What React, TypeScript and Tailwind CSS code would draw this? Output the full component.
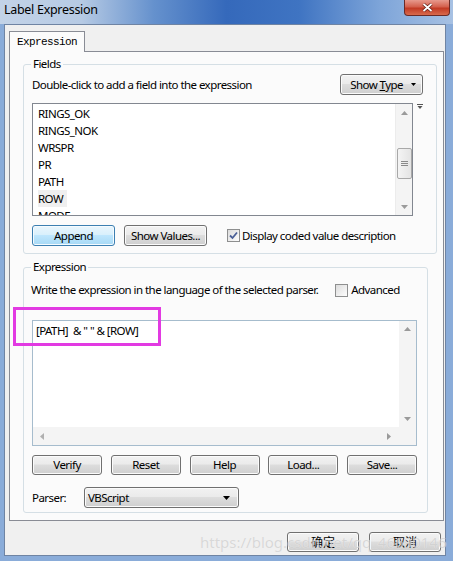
import React from "react";

const font = "font-['Noto_Sans',sans-serif]";
const t = "text-[11.5px] tracking-[-0.55px] text-black";

const btnBase =
  "flex items-center rounded-[3px] border border-[#707070] bg-[linear-gradient(#f2f2f2_0%,#ebebeb_45%,#dddddd_50%,#cfcfcf_100%)] leading-none shadow-[inset_0_0_0_1px_#fbfbfb]";
const btn = `${btnBase} justify-center ${t}`;

function ArrowUp() {
  return (
    <svg width="7" height="4" viewBox="0 0 7 4">
      <path d="M0 4 L3.5 0 L7 4 Z" fill="#9a9a9a" />
    </svg>
  );
}

function ArrowDown() {
  return (
    <svg width="7" height="4" viewBox="0 0 7 4">
      <path d="M0 0 L7 0 L3.5 4 Z" fill="#9a9a9a" />
    </svg>
  );
}

function Check({ checked }: { checked?: boolean }) {
  return (
    <span className="flex h-[13px] w-[13px] shrink-0 items-center justify-center border border-[#8e8f8f] bg-[linear-gradient(135deg,#dcdcdc,#fdfdfd)]">
      {checked && (
        <svg width="9" height="9" viewBox="0 0 9 9">
          <path d="M1 4.5 L3.5 7 L8 1.5" stroke="#4a5f97" strokeWidth="1.8" fill="none" />
        </svg>
      )}
    </span>
  );
}

const fields = ["RINGS_OK", "RINGS_NOK", "WRSPR", "PR", "PATH", "ROW", "MODE"];

export default function App() {
  return (
    <div className={`relative flex h-[561px] w-[453px] flex-col overflow-hidden bg-[#8aacd9] ${font}`}>
      {/* title bar */}
      <div className="flex h-[24px] items-start bg-[linear-gradient(90deg,#c3d3e7_0%,#b6cae4_18%,#6591cd_34%,#3569bb_50%,#3f74c2_66%,#7ea5d9_84%,#a7c1e3_100%)]">
        <span className="pl-[4px] pt-[1px] text-[12.5px] leading-[18px] tracking-[-0.3px] text-black">Label Expression</span>
        <span className="ml-auto mr-[3px] flex h-[16px] w-[46px] items-center justify-center rounded-b-[4px] border border-t-0 border-[#6b2a26] bg-[linear-gradient(#e79a8d_0%,#d4604d_45%,#c23a24_55%,#d86a4d_100%)]">
          <svg width="11" height="9" viewBox="0 0 11 9">
            <path d="M1.5 1 L9.5 8 M9.5 1 L1.5 8" stroke="#5a1a12" strokeWidth="3.2" />
            <path d="M1.5 1 L9.5 8 M9.5 1 L1.5 8" stroke="#ffffff" strokeWidth="1.8" />
          </svg>
        </span>
      </div>

      {/* client area */}
      <div className="ml-[4px] mr-[7px] mb-[5px] flex flex-1 flex-col border border-[#6f84a3] bg-[#f0f0f0] pl-[4px] pr-[2px] pt-[6px]">
        {/* tab header */}
        <div className="relative z-10 -mb-px flex h-[21px] w-[76px] items-center border border-b-0 border-[#898c95] bg-[#fbfbfb] pl-[7px] font-['Liberation_Mono',monospace] text-[11px] tracking-[-0.6px] text-black">
          Expression
        </div>

        {/* tab page */}
        <div className="flex h-[470px] w-[435px] flex-col border border-[#898c95] bg-[#fbfbfb] pl-[13px] pt-[4px]">
          {/* Fields group */}
          <fieldset className="w-[405px] rounded-[3px] border border-[#d5dfe5] pb-[7px] pl-[8px] pr-[13px]">
            <legend className={`ml-[-1px] px-[2px] leading-[16px] ${t}`}>Fields</legend>
            <div className="mt-[2px] flex h-[21px] items-center justify-between">
              <span className={t}>Double-click to add a field into the expression</span>
              <span className={`${btnBase} ${t} h-[21px] w-[83px] justify-end gap-[8px] pr-[6px]`}>
                <span>
                  Show <span className="underline">T</span>ype
                </span>
                <svg width="5" height="3" viewBox="0 0 5 3">
                  <path d="M0 0 L5 0 L2.5 3 Z" fill="#000" />
                </svg>
              </span>
            </div>
            <div className="relative mt-[8px] flex">
              <div className="flex h-[113px] w-[381px] border border-[#828790] bg-white">
                <div className="flex flex-1 flex-col overflow-hidden pl-[5px] pt-[1px]">
                  {fields.map((f) => (
                    <span
                      key={f}
                      className={`h-[17px] w-fit shrink-0 leading-[17px] ${t} ${
                        f === "ROW" ? "bg-[#efefef] pr-[4px]" : ""
                      }`}
                    >
                      {f}
                    </span>
                  ))}
                </div>
                <div className="flex w-[17px] flex-col items-center border-l border-[#ececec] bg-[#f4f4f4]">
                  <span className="flex h-[17px] items-center">
                    <ArrowUp />
                  </span>
                  <span className="mt-[27px] flex h-[31px] w-[15px] items-center justify-center rounded-[2px] border border-[#a8a8a8] bg-[linear-gradient(90deg,#f4f4f4,#e4e4e4)]">
                    <svg width="7" height="7" viewBox="0 0 7 7">
                      <path d="M0 1.5 H7 M0 3.5 H7 M0 5.5 H7" stroke="#8a8a8a" strokeWidth="1" />
                    </svg>
                  </span>
                  <span className="mt-auto flex h-[17px] items-center">
                    <ArrowDown />
                  </span>
                </div>
              </div>
              <svg className="ml-[4px] mt-[1px]" width="6" height="6" viewBox="0 0 6 6">
                <path d="M0 0.5 H6" stroke="#555" strokeWidth="1" />
                <path d="M0.5 2 L5.5 2 L3 5 Z" fill="#555" />
              </svg>
            </div>
            <div className="mt-[9px] flex h-[21px] items-center">
              <span
                className={`flex h-[21px] w-[83px] items-center justify-center rounded-[3px] border border-[#3c7fb1] bg-[linear-gradient(#eaf6fd_0%,#d9f0fc_45%,#bee6fd_50%,#a7d9f5_100%)] shadow-[inset_0_0_0_1px_#f4fbff] ${t}`}
              >
                Append
              </span>
              <span className={`${btn} ml-[9px] h-[21px] w-[83px]`}>Show Values...</span>
              <span className={`ml-[20px] flex items-center gap-[2px] ${t}`}>
                <Check checked />
                Display coded value description
              </span>
            </div>
          </fieldset>

          {/* Expression group */}
          <fieldset className="mt-[5px] w-[405px] rounded-[3px] border border-[#d5dfe5] pb-[4px] pl-[8px] pr-[10px]">
            <legend className={`ml-[-1px] px-[2px] leading-[16px] ${t}`}>Expression</legend>
            <div className="mt-[7px] flex h-[16px] items-center">
              <span className={`ml-[-1px] ${t}`}>Write the expression in the language of the selected parser.</span>
              <span className={`ml-[17px] flex items-center gap-[3px] ${t}`}>
                <Check />
                Advanced
              </span>
            </div>
            <div className="mt-[22px] flex h-[126px] w-[385px] flex-col border border-[#a6bccd] bg-white">
              <div className="flex flex-1">
                <div className={`flex-1 whitespace-pre pl-[3px] pt-[2px] leading-[16px] ${t}`}>
                  {'[PATH]  & " " & [ROW]'}
                </div>
                <div className="flex w-[17px] flex-col items-center justify-between bg-[#f4f4f4] py-[6px]">
                  <ArrowUp />
                  <ArrowDown />
                </div>
              </div>
              <div className="flex h-[18px] items-center bg-[#f4f4f4] pl-[7px]">
                <svg width="4" height="7" viewBox="0 0 4 7">
                  <path d="M4 0 L4 7 L0 3.5 Z" fill="#b0b0b0" />
                </svg>
                <svg className="ml-[343px]" width="4" height="7" viewBox="0 0 4 7">
                  <path d="M0 0 L0 7 L4 3.5 Z" fill="#9a9a9a" />
                </svg>
              </div>
            </div>
            <div className="mt-[9px] flex w-[385px] justify-between">
              {["Verify", "Reset", "Help", "Load...", "Save..."].map((b) => (
                <span key={b} className={`${btn} h-[20px] w-[70px]`}>
                  {b}
                </span>
              ))}
            </div>
            <div className="mt-[12px] flex h-[21px] items-center">
              <span className={`w-[52px] ${t}`}>Parser:</span>
              <span className={`${btnBase} ${t} h-[21px] w-[155px] justify-between pl-[3px] pr-[8px]`}>
                <span>VBScript</span>
                <svg width="7" height="4" viewBox="0 0 7 4">
                  <path d="M0 0 L7 0 L3.5 4 Z" fill="#000" />
                </svg>
              </span>
            </div>
          </fieldset>
        </div>

        {/* dialog buttons */}
        <div className="mt-[11px] flex justify-end gap-[10px] pr-[2px]">
          <span className={`${btnBase} h-[20px] w-[72px] justify-center font-['Noto_Sans_CJK_SC',sans-serif] text-[12px] text-black`}>
            确定
          </span>
          <span className={`${btnBase} h-[20px] w-[72px] justify-center font-['Noto_Sans_CJK_SC',sans-serif] text-[12px] text-black`}>
            取消
          </span>
        </div>
      </div>

      {/* highlight box drawn over the screenshot */}
      <div className="pointer-events-none absolute left-[13px] top-[307px] h-[39px] w-[148px] border-[3px] border-[#e23ae2]" />

      {/* watermark */}
      <span className="pointer-events-none absolute left-[200px] top-[533px] text-[15px] leading-[18px] text-[#d0d0d0] opacity-75 [text-shadow:0_0_1px_#ffffff]">
        https://blog.csdn.net/qq_46690146
      </span>
    </div>
  );
}
